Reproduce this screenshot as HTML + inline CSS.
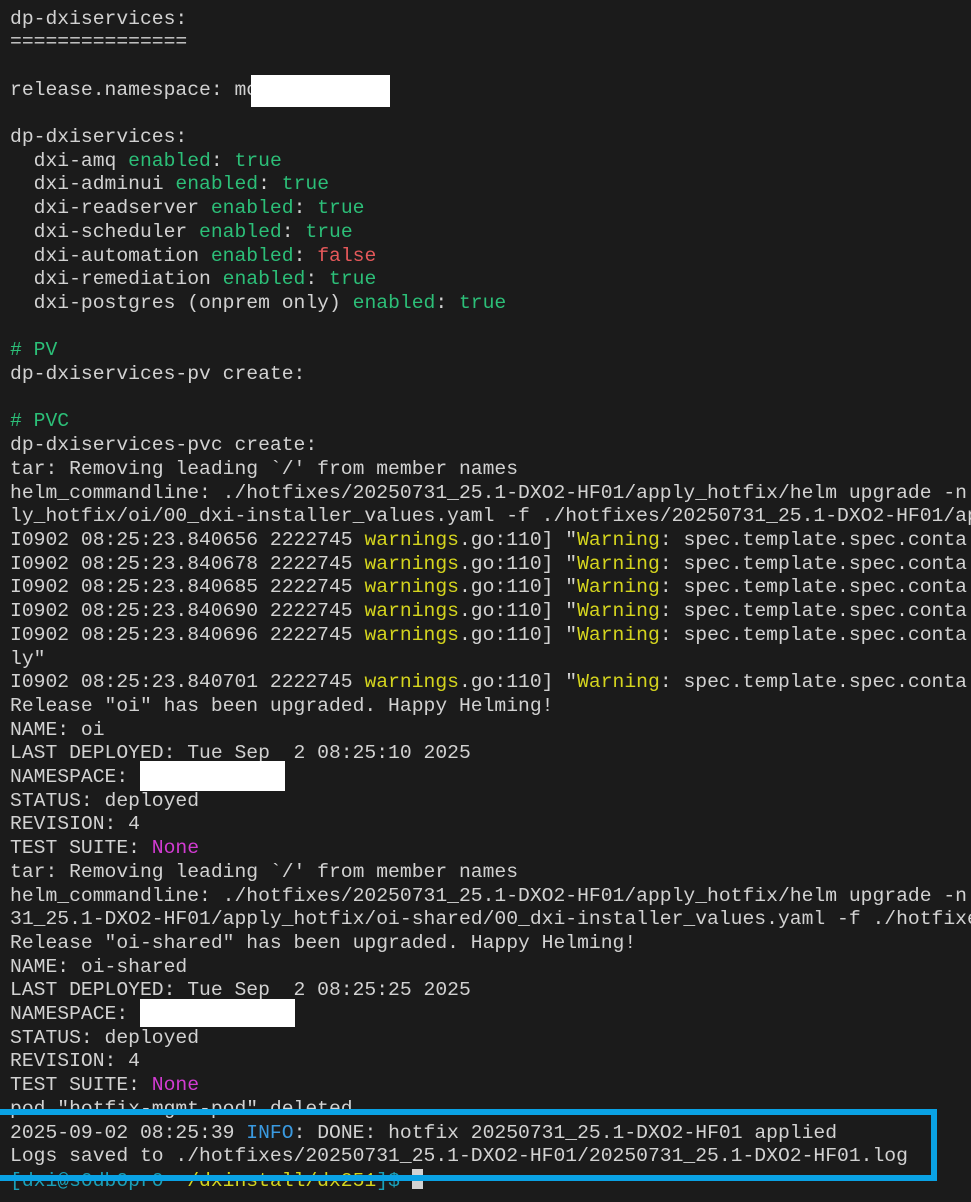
<!DOCTYPE html>
<html><head><meta charset="utf-8"><style>
html,body{margin:0;padding:0;background:#1b1b1b;width:971px;height:1202px;overflow:hidden;position:relative}
pre{position:absolute;left:10px;top:-16.2px;margin:0;font-family:"Liberation Mono","DejaVu Sans Mono",monospace;font-size:19.7px;line-height:23.7px;color:#d2d2d2;white-space:pre}
.g{color:#2cbf78}.r{color:#e5585a}.y{color:#d4d41e}.m{color:#d23bd2}.b{color:#3a9ae0}.c{color:#1aa0b8}
.w{position:absolute;background:#fff}
.box{position:absolute;left:0;top:1109px;width:931px;height:60px;border:6px solid #0aa2e4;border-left:none}
.cur{display:inline-block;width:11px;height:20px;background:#d2d2d2;vertical-align:-3px}
</style></head><body>
<pre>Notes:
dp-dxiservices:
===============

release.namespace: mo

dp-dxiservices:
  dxi-amq <span class="g">enabled</span>: <span class="g">true</span>
  dxi-adminui <span class="g">enabled</span>: <span class="g">true</span>
  dxi-readserver <span class="g">enabled</span>: <span class="g">true</span>
  dxi-scheduler <span class="g">enabled</span>: <span class="g">true</span>
  dxi-automation <span class="g">enabled</span>: <span class="r">false</span>
  dxi-remediation <span class="g">enabled</span>: <span class="g">true</span>
  dxi-postgres (onprem only) <span class="g">enabled</span>: <span class="g">true</span>

<span class="g"># PV</span>
dp-dxiservices-pv create:

<span class="g"># PVC</span>
dp-dxiservices-pvc create:
tar: Removing leading `/' from member names
helm_commandline: ./hotfixes/20250731_25.1-DXO2-HF01/apply_hotfix/helm upgrade -n
ly_hotfix/oi/00_dxi-installer_values.yaml -f ./hotfixes/20250731_25.1-DXO2-HF01/ap
I0902 08:25:23.840656 2222745 <span class="y">warnings</span>.go:110] "<span class="y">Warning</span>: spec.template.spec.conta
I0902 08:25:23.840678 2222745 <span class="y">warnings</span>.go:110] "<span class="y">Warning</span>: spec.template.spec.conta
I0902 08:25:23.840685 2222745 <span class="y">warnings</span>.go:110] "<span class="y">Warning</span>: spec.template.spec.conta
I0902 08:25:23.840690 2222745 <span class="y">warnings</span>.go:110] "<span class="y">Warning</span>: spec.template.spec.conta
I0902 08:25:23.840696 2222745 <span class="y">warnings</span>.go:110] "<span class="y">Warning</span>: spec.template.spec.conta
ly"
I0902 08:25:23.840701 2222745 <span class="y">warnings</span>.go:110] "<span class="y">Warning</span>: spec.template.spec.conta
Release "oi" has been upgraded. Happy Helming!
NAME: oi
LAST DEPLOYED: Tue Sep  2 08:25:10 2025
NAMESPACE: r
STATUS: deployed
REVISION: 4
TEST SUITE: <span class="m">None</span>
tar: Removing leading `/' from member names
helm_commandline: ./hotfixes/20250731_25.1-DXO2-HF01/apply_hotfix/helm upgrade -n
31_25.1-DXO2-HF01/apply_hotfix/oi-shared/00_dxi-installer_values.yaml -f ./hotfixe
Release "oi-shared" has been upgraded. Happy Helming!
NAME: oi-shared
LAST DEPLOYED: Tue Sep  2 08:25:25 2025
NAMESPACE: 
STATUS: deployed
REVISION: 4
TEST SUITE: <span class="m">None</span>
pod "hotfix-mgmt-pod" deleted
2025-09-02 08:25:39 <span class="b">INFO</span>: DONE: hotfix 20250731_25.1-DXO2-HF01 applied
Logs saved to ./hotfixes/20250731_25.1-DXO2-HF01/20250731_25.1-DXO2-HF01.log
<span class="c">[dxi@s0db0pr0 </span><span class="y">~/dxinstall/dx251</span><span class="c">]$</span> <span class="cur"></span></pre>
<div class="w" style="left:251px;top:75px;width:139px;height:32px"></div>
<div class="w" style="left:140px;top:761px;width:145px;height:30px"></div>
<div class="w" style="left:140px;top:999px;width:155px;height:28px"></div>
<div class="box"></div>
</body></html>
